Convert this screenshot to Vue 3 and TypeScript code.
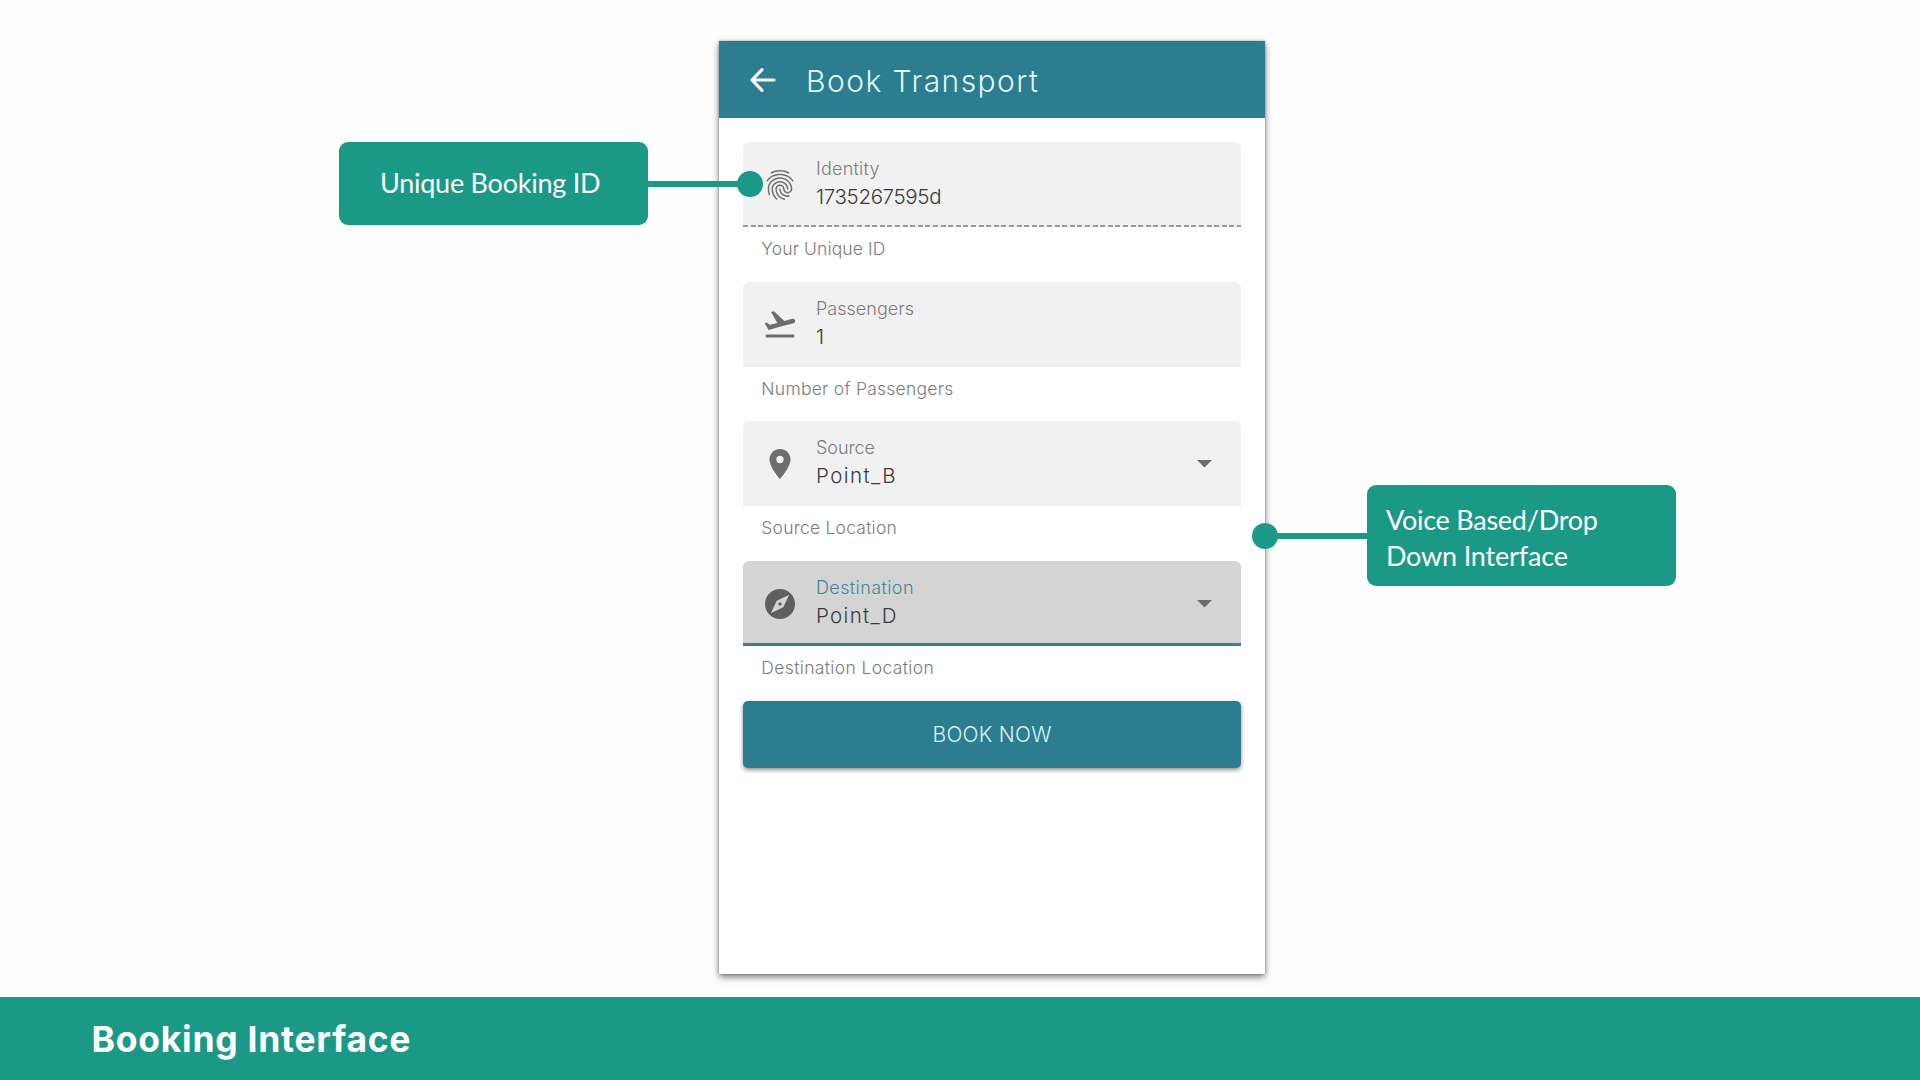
<script setup lang="ts">
interface Field {
  kind: string
  label: string
  labelWidth: number
  value: string
  valueWidth: number
  helper: string
  helperWidth: number
  icon: string
  select: boolean
}

const fields: Field[] = [
  {
    kind: 'readonly', label: 'Identity', labelWidth: 63.5, value: '1735267595d', valueWidth: 125.5,
    helper: 'Your Unique ID', helperWidth: 124, select: false,
    icon: 'M17.81 4.47c-.08 0-.16-.02-.23-.06C15.66 3.42 14 3 12.01 3c-1.98 0-3.86.47-5.57 1.41-.24.13-.54.04-.68-.2-.13-.24-.04-.55.2-.68C7.82 2.52 9.86 2 12.01 2c2.13 0 3.99.47 6.03 1.52.25.13.34.43.21.67-.09.18-.26.28-.44.28zM3.5 9.72c-.1 0-.2-.03-.29-.09-.23-.16-.28-.47-.12-.7.99-1.4 2.25-2.5 3.75-3.27C9.98 4.04 14 4.03 17.15 5.65c1.5.77 2.76 1.86 3.75 3.25.16.22.11.54-.12.7-.23.16-.54.11-.7-.12-.9-1.26-2.04-2.25-3.39-2.94-2.87-1.47-6.54-1.47-9.4.01-1.36.7-2.5 1.7-3.4 2.96-.08.14-.23.21-.39.21zm6.25 12.07c-.13 0-.26-.05-.35-.15-.87-.87-1.34-1.43-2.01-2.64-.69-1.23-1.05-2.73-1.05-4.34 0-2.97 2.54-5.39 5.66-5.39s5.66 2.42 5.66 5.39c0 .28-.22.5-.5.5s-.5-.22-.5-.5c0-2.42-2.09-4.39-4.66-4.39-2.57 0-4.66 1.97-4.66 4.39 0 1.44.32 2.77.93 3.85.64 1.15 1.08 1.64 1.85 2.42.19.2.19.51 0 .71-.11.1-.24.15-.37.15zm7.17-1.85c-1.19 0-2.24-.3-3.1-.89-1.49-1.01-2.38-2.65-2.38-4.39 0-.28.22-.5.5-.5s.5.22.5.5c0 1.41.72 2.74 1.94 3.56.71.48 1.54.71 2.54.71.24 0 .64-.03 1.04-.1.27-.05.53.13.58.41.05.27-.13.53-.41.58-.57.11-1.07.12-1.21.12zM14.91 22c-.04 0-.09-.01-.13-.02-1.59-.44-2.63-1.03-3.72-2.1-1.4-1.39-2.17-3.24-2.17-5.22 0-1.62 1.38-2.94 3.08-2.94 1.7 0 3.08 1.32 3.08 2.94 0 1.07.93 1.94 2.08 1.94s2.08-.87 2.08-1.94c0-3.77-3.25-6.83-7.25-6.83-2.84 0-5.44 1.58-6.61 4.03-.39.81-.59 1.76-.59 2.8 0 .78.07 2.01.67 3.61.1.26-.03.55-.29.64-.26.1-.55-.04-.64-.29-.49-1.31-.73-2.61-.73-3.96 0-1.2.23-2.29.68-3.24 1.33-2.79 4.28-4.6 7.51-4.6 4.55 0 8.25 3.51 8.25 7.83 0 1.62-1.38 2.94-3.08 2.94s-3.08-1.32-3.08-2.94c0-1.07-.93-1.94-2.08-1.94s-2.08.87-2.08 1.94c0 1.71.66 3.31 1.87 4.51.95.94 1.86 1.46 3.27 1.85.27.07.42.35.35.61-.05.23-.26.38-.47.38z',
  },
  {
    kind: 'plain', label: 'Passengers', labelWidth: 98, value: '1', valueWidth: 0,
    helper: 'Number of Passengers', helperWidth: 192, select: false,
    icon: 'M2.5 19h19v2h-19zm19.57-9.36c-.21-.8-1.04-1.28-1.84-1.06L14.92 10l-6.9-6.43-1.93.51 4.14 7.17-4.97 1.33-1.97-1.54-1.45.39 1.82 3.16.77 1.33 1.6-.43 5.31-1.42 4.35-1.16L21 11.49c.81-.23 1.28-1.05 1.07-1.85z',
  },
  {
    kind: 'plain', label: 'Source', labelWidth: 59, value: 'Point_B', valueWidth: 79.5,
    helper: 'Source Location', helperWidth: 135.5, select: true,
    icon: 'M12 2C8.13 2 5 5.13 5 9c0 5.25 7 13 7 13s7-7.75 7-13c0-3.87-3.13-7-7-7zm0 9.5c-1.38 0-2.5-1.12-2.5-2.5s1.12-2.5 2.5-2.5 2.5 1.12 2.5 2.5-1.12 2.5-2.5 2.5z',
  },
  {
    kind: 'focused', label: 'Destination', labelWidth: 97.5, value: 'Point_D', valueWidth: 80.5,
    helper: 'Destination Location', helperWidth: 172.5, select: true,
    icon: 'M12 10.9c-.61 0-1.1.49-1.1 1.1s.49 1.1 1.1 1.1c.61 0 1.1-.49 1.1-1.1s-.49-1.1-1.1-1.1zM12 2C6.48 2 2 6.48 2 12s4.48 10 10 10 10-4.48 10-10S17.52 2 12 2zm2.19 12.19L6 18l3.81-8.19L18 6l-3.81 8.19z',
  },
]

// Spreads the letters of a single-line text until it is the given number of pixels wide.
const vFit = {
  mounted(el: HTMLElement, binding: { value: number }) {
    const count = (el.textContent ?? '').length
    if (!binding.value || count < 2) return
    const spacing = (binding.value - el.getBoundingClientRect().width) / (count - 1)
    el.style.letterSpacing = `${spacing.toFixed(3)}px`
    el.style.marginRight = `${(-spacing).toFixed(3)}px`
  },
}
</script>

<template>
  <div class="slide">
    <main class="stage">
      <div class="side left">
        <div class="callout single"><span v-fit="220.5">Unique Booking ID</span></div>
        <div class="link"></div>
        <div class="dot"></div>
      </div>

      <section class="phone">
        <header class="bar">
          <svg class="back" viewBox="0 0 36 36">
            <path d="M29 18H7.500M17 7.700L7 18l10 10.300" fill="none" stroke="#fff" stroke-width="3.200" stroke-linecap="round" stroke-linejoin="round" />
          </svg>
          <h1><span v-fit="232">Book Transport</span></h1>
        </header>
        <form class="form" @submit.prevent>
          <div v-for="f in fields" :key="f.label" class="group">
            <div class="field" :class="f.kind">
              <svg class="icon" viewBox="0 0 24 24"><path :d="f.icon" /></svg>
              <div class="texts">
                <label><span v-fit="f.labelWidth">{{ f.label }}</span></label>
                <div class="value"><span v-fit="f.valueWidth">{{ f.value }}</span></div>
              </div>
              <svg v-if="f.select" class="caret" viewBox="0 0 15 8"><path d="M0 0h15L7.500 7.500z" /></svg>
            </div>
            <div class="helper"><span v-fit="f.helperWidth">{{ f.helper }}</span></div>
          </div>
          <button class="book" type="submit"><span v-fit="119">BOOK NOW</span></button>
        </form>
      </section>

      <div class="side right">
        <div class="dot"></div>
        <div class="link"></div>
        <div class="callout double">
          <span v-fit="212">Voice Based/Drop</span>
          <span v-fit="182">Down Interface</span>
        </div>
      </div>
    </main>
    <footer class="footer"><span v-fit="319">Booking Interface</span></footer>
  </div>
</template>

<style>
body {
  margin: 0;
  background: #fff;
}
</style>

<style scoped>
.slide {
  display: flex;
  flex-direction: column;
  width: 1920px;
  height: 1080px;
  overflow: hidden;
  background: #fefefe;
  font-family: Lato, "Open Sans", sans-serif;
}
.slide span {
  white-space: nowrap;
  display: inline-block;
}
.stage {
  position: relative;
  height: 997px;
  box-sizing: border-box;
  padding: 41px 0 0 719px;
}
.phone {
  width: 546px;
  height: 933px;
  background: #fff;
  box-shadow: 0 3px 7px rgba(0, 0, 0, 0.52), 0 0 2px rgba(0, 0, 0, 0.3);
  font-family: Inter, Lato, sans-serif;
}
.bar {
  display: flex;
  align-items: center;
  height: 77px;
  padding-left: 26px;
  background: #2d7d90;
}
.back {
  width: 36px;
  height: 36px;
}
h1 {
  margin: 2px 0 0 25px;
  color: #dcf6f6;
  font-size: 30px;
  font-weight: 300;
  line-height: 40px;
}
.form {
  padding: 24px 24px 0;
}
.group {
  height: 139.700px;
}
.field {
  display: flex;
  align-items: center;
  box-sizing: border-box;
  height: 85px;
  padding: 0 29px 0 18.500px;
  border-radius: 6px 6px 0 0;
  background: #f1f1f1;
}
.readonly {
  background: repeating-linear-gradient(90deg, #999 0 5px, transparent 5px 7.600px) 0 100% / 100% 2px no-repeat, #f1f1f1;
}
.focused {
  background: #d4d4d4;
  box-shadow: inset 0 -3px #3f7f8d;
}
.icon {
  flex: none;
  width: 36px;
  height: 36px;
  fill: #6d6d6d;
}
.focused .icon {
  fill: #5f5f5f;
}
.texts {
  flex: 1;
  padding: 0 0 3px 18.500px;
}
label {
  display: block;
  color: #7c7c7c;
  font-size: 18px;
  line-height: 28px;
  font-weight: 300;
}
.focused label {
  color: #3f8999;
}
.value {
  color: #3a3a3a;
  font-size: 20.500px;
  line-height: 28px;
  font-weight: 300;
}
.caret {
  width: 15px;
  height: 8px;
  margin-top: 1px;
  fill: #6d6d6d;
}
.helper {
  padding: 8px 0 0 18.300px;
  color: #7c7c7c;
  font-size: 17.500px;
  line-height: 28px;
  font-weight: 300;
}
.book {
  display: block;
  width: 100%;
  height: 67px;
  padding: 0;
  border: 0;
  border-radius: 5px;
  background: #2d7d90;
  box-shadow: 0 2px 4px rgba(0, 0, 0, 0.45);
  color: #d8f2f3;
  font-family: inherit;
  font-size: 21px;
  font-weight: 300;
}
/* Annotations overlap the edges of the phone mock-up. */
.side {
  position: absolute;
  display: flex;
  align-items: center;
}
.left {
  left: 338.500px;
  top: 142px;
}
.right {
  left: 1252.400px;
  top: 485px;
}
.callout {
  display: flex;
  flex-direction: column;
  justify-content: center;
  box-sizing: border-box;
  width: 309.500px;
  border-radius: 9px;
  background: #1b9987;
  color: #fff;
  font-size: 27px;
  line-height: 36px;
}
.single {
  height: 83px;
  padding: 0 6px 2px 0;
  align-items: center;
}
.double {
  height: 101px;
  padding: 4px 0 0 19px;
  align-items: flex-start;
}
.link {
  height: 6px;
  background: #1b9987;
}
.left .link {
  width: 90px;
}
.right .link {
  width: 89.500px;
}
.dot {
  width: 26px;
  height: 26px;
  border-radius: 50%;
  background: #1b9987;
}
.left .dot {
  margin-left: -1px;
}
.right .dot {
  margin-right: -1px;
}
.footer {
  display: flex;
  align-items: center;
  flex: 1;
  padding: 1px 0 0 91.500px;
  background: #1b9987;
  color: #fff;
  font-family: Inter, Lato, sans-serif;
  font-size: 35.500px;
  font-weight: 700;
}
</style>
